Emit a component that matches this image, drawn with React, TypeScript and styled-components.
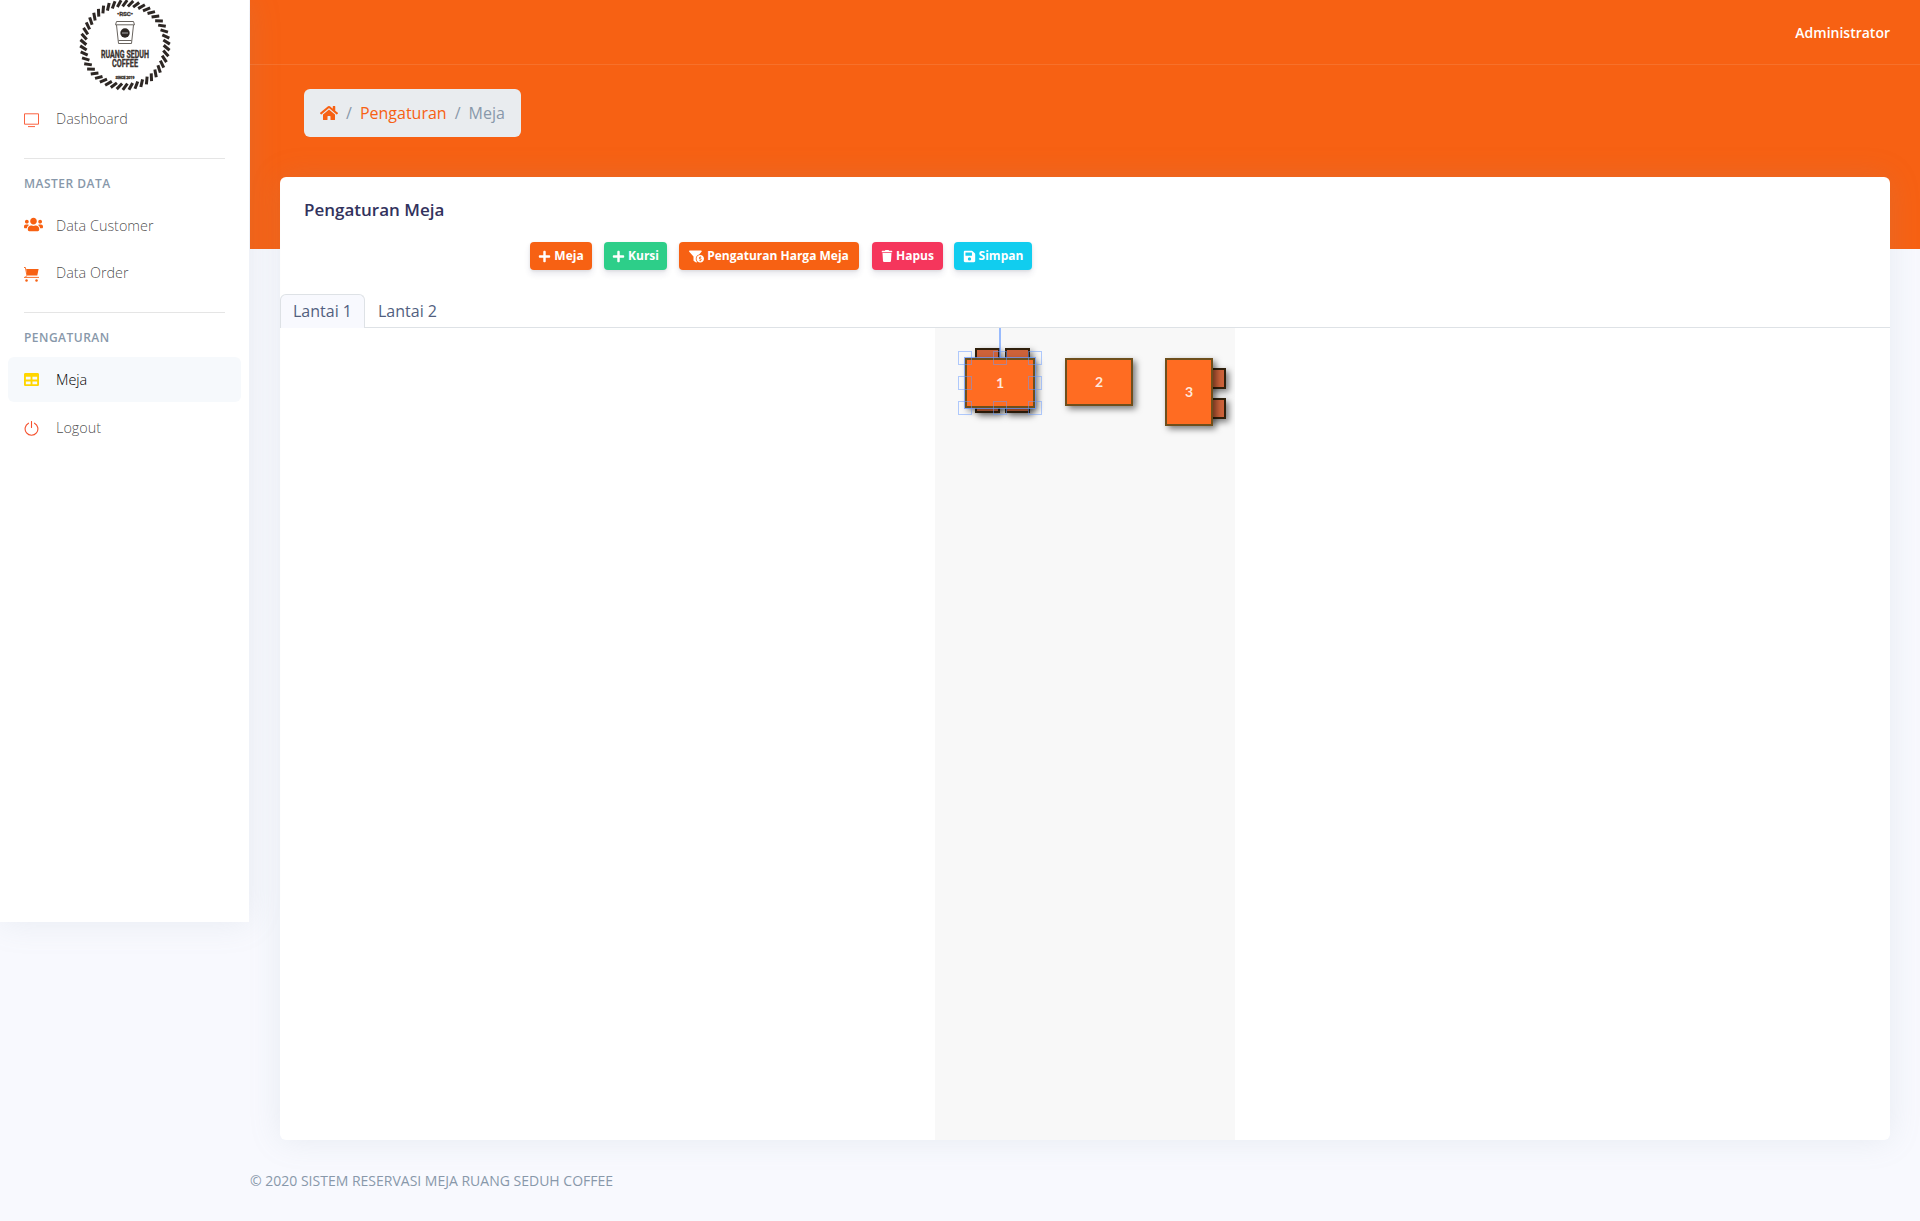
import React from "react";
import styled, { createGlobalStyle } from "styled-components";
import { FaHome, FaPlus, FaFunnelDollar, FaTrash, FaSave, FaUsers, FaTable } from "react-icons/fa";

const ORANGE = "#f76113";

const Global = createGlobalStyle`
  *, *::before, *::after { box-sizing: border-box; }
  body {
    margin: 0;
    background: #f8f9fe;
    color: #525f7f;
    font: 400 16px/1.5 "Open Sans", sans-serif;
  }
`;

const Page = styled.div`
  display: flex;
  align-items: flex-start;
  height: 1221px;
  overflow: hidden;
`;

const Sidebar = styled.nav`
  position: relative;
  z-index: 2;
  flex: 0 0 249px;
  height: 922px;
  margin-right: 1px;
  background: #fff;
  box-shadow: 0 0 32px 0 rgba(136, 152, 170, 0.15);
`;

const Brand = styled.div`
  display: flex;
  justify-content: center;
  height: 96px;
  padding-left: 1px;
`;

const NavList = styled.div`
  display: flex;
  flex-direction: column;
`;

const NavLink = styled.a<{ $active?: boolean }>`
  display: flex;
  align-items: center;
  height: 45px;
  margin: 0 8px ${(p) => (p.$active ? 3 : 2)}px;
  padding: 0 16px;
  border-radius: 6px;
  font-size: 14.4px;
  font-weight: 300;
  color: ${(p) => (p.$active ? "#000" : "rgba(0,0,0,0.72)")};
  background: ${(p) => (p.$active ? "#f6f9fc" : "transparent")};
`;

const NavIcon = styled.span<{ $color: string; $shift?: number }>`
  display: flex;
  align-items: center;
  flex: 0 0 32px;
  margin-top: ${(p) => (p.$shift ?? 0) * 2}px;
  color: ${(p) => p.$color};
`;

const Divider = styled.hr`
  width: 201px;
  height: 1px;
  margin: 15px 24px 16px;
  border: 0;
  background: rgba(0, 0, 0, 0.1);
`;

const Heading = styled.h6`
  margin: 0 24px 10px;
  font-size: 12px;
  line-height: 18px;
  font-weight: 600;
  letter-spacing: 0.48px;
  text-transform: uppercase;
  color: #8898aa;
`;

const Main = styled.div`
  flex: 1;
  min-width: 0;
  height: 100%;
  background: linear-gradient(${ORANGE} 0 249px, transparent 249px);
`;

const TopBar = styled.header`
  display: flex;
  align-items: center;
  justify-content: flex-end;
  height: 65px;
  padding-right: 30px;
  border-bottom: 1px solid rgba(255, 255, 255, 0.1);
  font-size: 14px;
  font-weight: 600;
  color: #fff;
`;

const Breadcrumb = styled.div`
  display: flex;
  align-items: center;
  width: max-content;
  height: 48px;
  margin: 24px 0 40px 54px;
  padding: 0 16px;
  border-radius: 6px;
  background: #e9ecef;
  color: #8898aa;
`;

const Crumb = styled.span<{ $link?: boolean }>`
  display: flex;
  align-items: center;
  color: ${(p) => (p.$link ? ORANGE : "#8898aa")};
`;

const Slash = styled.span`
  padding: 0 8px;
`;

const Card = styled.section`
  display: flex;
  flex-direction: column;
  height: 963px;
  margin: 0 30px;
  border-radius: 6px;
  background: #fff;
  box-shadow: 0 0 32px 0 rgba(136, 152, 170, 0.15);
`;

const Title = styled.h3`
  margin: 20px 24px 0;
  font-size: 17px;
  line-height: 26px;
  font-weight: 600;
  color: #32325d;
`;

const Toolbar = styled.div`
  display: flex;
  height: 28px;
  margin: 19px 0 24px 250px;
`;

const Button = styled.button<{ $bg: string; $w: number; $gap?: number }>`
  display: flex;
  align-items: center;
  justify-content: center;
  gap: 3px;
  width: ${(p) => p.$w}px;
  height: 28px;
  margin: 0 ${(p) => p.$gap ?? 12}px 0 0;
  padding: 0;
  border: 0;
  border-radius: 4px;
  background: ${(p) => p.$bg};
  color: #fff;
  font: 700 12px/18px "Open Sans", sans-serif;
  white-space: nowrap;
  box-shadow: 0 4px 6px rgba(50, 50, 93, 0.11), 0 1px 3px rgba(0, 0, 0, 0.08);
`;

const Tabs = styled.div`
  display: flex;
  height: 34px;
  border-bottom: 1px solid #dee2e6;
`;

const Tab = styled.div<{ $active?: boolean }>`
  height: 34px;
  padding: 4px 12px 0;
  border: 1px solid ${(p) => (p.$active ? "#dee2e6" : "transparent")};
  border-bottom: 0;
  border-radius: 6px 6px 0 0;
  background: ${(p) => (p.$active ? "#f8f9fe" : "transparent")};
`;

const FloorPlan = styled.div`
  flex: 1;
  width: 300px;
  margin: 0 auto;
  background: #f8f8f8;
`;

const SIDE_ICON = 15;

const TvIcon = () => (
  <svg width={SIDE_ICON} height={SIDE_ICON} viewBox="0 0 15 15" fill="none" stroke="currentColor">
    <path d="M.5 .8h14v10.4H.5z M4 13.6h7" />
  </svg>
);

const CartIcon = () => (
  <svg width={SIDE_ICON} height={SIDE_ICON} viewBox="0 0 15 15" fill="currentColor">
    <path d="M2.2 2h12.4l-1.3 6.6H3.2z" />
    <path d="M0 .5h1.4l1.5 7.8-1.5 2 M0 10.4h15" fill="none" stroke="currentColor" strokeWidth=".9" />
    <circle cx="2.5" cy="13.6" r="1.25" />
    <circle cx="12.5" cy="13.6" r="1.25" />
  </svg>
);

const PowerIcon = () => (
  <svg width={SIDE_ICON} height={SIDE_ICON} viewBox="0 0 15 15" fill="none" stroke="currentColor" strokeLinecap="round" strokeWidth="1.1">
    <path d="M7.5.5v6 M4.5 2.2a6.4 6.4 0 1 0 6 0" />
  </svg>
);

const LogoText = styled.text`
  font-family: "Roboto", sans-serif;
  font-weight: 700;
  text-anchor: middle;
  fill: #3b3430;
  stroke: #3b3430;
  stroke-width: 0.3px;
`;

const Logo = () => (
  <svg width="92" height="92" viewBox="0 0 92 92">
    <g stroke="#2d2724" strokeWidth="3">
      {Array.from({ length: 46 }, (_, i) => (
        <path key={i} d="M43.6 6.4L48.2 .2" transform={`rotate(${(i * 360) / 46} 46 45)`} />
      ))}
    </g>
    <LogoText x="46" y="16" fontSize="6.2" textLength="16">•RSC•</LogoText>
    <g fill="none" stroke="#69645f" strokeWidth="1">
      <path d="M37.5 21.5h17l1 3.3h-19z M37.5 25l2 18.5h13l2-18.5 M39.5 40.5h13" />
    </g>
    <circle cx="46" cy="33" r="4.7" fill="#2d2724" />
    <path d="M43 33h6" stroke="#aaa" />
    <LogoText x="46" y="58" fontSize="10.2" textLength="48" lengthAdjust="spacingAndGlyphs">RUANG SEDUH</LogoText>
    <LogoText x="46" y="67.3" fontSize="10.2" textLength="26" lengthAdjust="spacingAndGlyphs">COFFEE</LogoText>
    <LogoText x="46" y="78.5" fontSize="3.8" textLength="19" strokeWidth="0">SINCE 2019</LogoText>
  </svg>
);

const ShapeLabel = styled.text`
  font: 700 14px Lato, sans-serif;
  text-anchor: middle;
  fill: rgba(255, 255, 255, 0.85);
`;

const Shadowed = styled.g`
  filter: drop-shadow(3px 3px 3px rgba(0, 0, 0, 0.5));
`;

const chair = { fill: "#cd623a", stroke: "#30200c", strokeWidth: 2 };
const table = { fill: "#ff6c22", stroke: "#6e4f1c", strokeWidth: 2 };

const Furniture = () => (
  <svg width="300" height="140" viewBox="0 0 300 140" display="block">
    {[36, 66].map((x) => (
      <Shadowed key={x}>
        <rect x={x + 5} y="21" width="23" height="18" {...chair} />
        <rect x={x + 5} y="66" width="23" height="18" {...chair} />
      </Shadowed>
    ))}
    {[41, 71].map((y) => (
      <Shadowed key={y}><rect x="271" y={y} width="19" height="19" {...chair} /></Shadowed>
    ))}
    <Shadowed><rect x="31" y="31" width="68" height="48" {...table} /></Shadowed>
    <Shadowed><rect x="131" y="31" width="66" height="46" {...table} /></Shadowed>
    <Shadowed><rect x="231" y="31" width="46" height="66" {...table} /></Shadowed>
    <ShapeLabel x="65" y="60">1</ShapeLabel>
    <ShapeLabel x="164" y="59">2</ShapeLabel>
    <ShapeLabel x="254" y="69">3</ShapeLabel>
    <g fill="none" stroke="rgba(102,153,255,.5)">
      <path d="M65 0v29" stroke="rgba(102,153,255,.65)" strokeWidth="2" />
      <rect x="29.5" y="29.5" width="71" height="51" stroke="rgba(102,153,255,.75)" />
      {[23.5, 58.5, 93.5].map((x) =>
        [23.5, 48.5, 73.5].map((y) =>
          x === 58.5 && y === 48.5 ? null : <rect key={`${x}-${y}`} x={x} y={y} width="13" height="13" />
        )
      )}
    </g>
  </svg>
);

const Footer = styled.footer`
  margin-top: 30px;
  font-size: 14px;
  line-height: 21px;
  color: #8898aa;
`;

export default function App() {
  return (
    <Page>
      <Global />
      <Sidebar>
        <Brand><Logo /></Brand>
        <NavList>
          <NavLink><NavIcon $color="#fb6340" $shift={2}><TvIcon /></NavIcon>Dashboard</NavLink>
          <Divider />
          <Heading>Master Data</Heading>
          <NavLink><NavIcon $color={ORANGE} $shift={-1}><FaUsers size={19} /></NavIcon>Data Customer</NavLink>
          <NavLink><NavIcon $color={ORANGE} $shift={2}><CartIcon /></NavIcon>Data Order</NavLink>
          <Divider />
          <Heading>Pengaturan</Heading>
          <NavLink $active><NavIcon $color="#ffd600"><FaTable size={15} /></NavIcon>Meja</NavLink>
          <NavLink><NavIcon $color="#f5502d" $shift={1}><PowerIcon /></NavIcon>Logout</NavLink>
        </NavList>
      </Sidebar>
      <Main>
        <TopBar>Administrator</TopBar>
        <Breadcrumb>
          <Crumb $link><FaHome size={18} /></Crumb>
          <Slash>/</Slash>
          <Crumb $link>Pengaturan</Crumb>
          <Slash>/</Slash>
          <Crumb>Meja</Crumb>
        </Breadcrumb>
        <Card>
          <Title>Pengaturan Meja</Title>
          <Toolbar>
            <Button $bg={ORANGE} $w={62}><FaPlus size={13} />Meja</Button>
            <Button $bg="#2dce89" $w={63}><FaPlus size={13} />Kursi</Button>
            <Button $bg={ORANGE} $w={180} $gap={13}><FaFunnelDollar size={15} />Pengaturan Harga Meja</Button>
            <Button $bg="#f5365c" $w={71} $gap={11}><FaTrash size={12} />Hapus</Button>
            <Button $bg="#11cdef" $w={78}><FaSave size={13} />Simpan</Button>
          </Toolbar>
          <Tabs>
            <Tab $active>Lantai 1</Tab>
            <Tab>Lantai 2</Tab>
          </Tabs>
          <FloorPlan><Furniture /></FloorPlan>
        </Card>
        <Footer>© 2020 SISTEM RESERVASI MEJA RUANG SEDUH COFFEE</Footer>
      </Main>
    </Page>
  );
}
